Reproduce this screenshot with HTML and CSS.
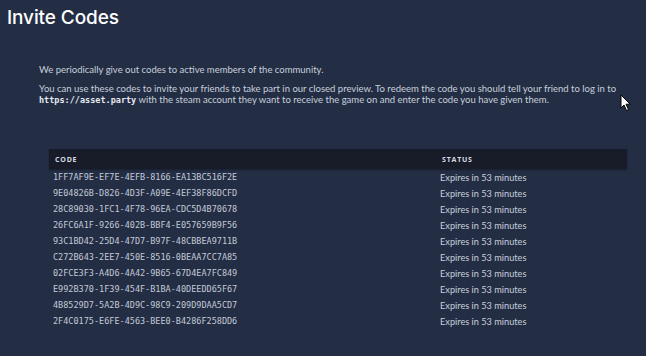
FILE: index.html
```html
<!DOCTYPE html>
<html lang="en">
<head>
<meta charset="utf-8">
<title>Invite Codes</title>
<link rel="stylesheet" href="styles.css">
</head>
<body>
<header class="top">
  <h1 class="title">Invite Codes</h1>
</header>
<main class="content">
  <p class="intro">We periodically give out codes to active members of the community.</p>
  <p class="intro">You can use these codes to invite your friends to take part in our closed preview. To redeem the code you should tell your friend to log in to <code class="url">https://asset.party</code> with the steam account they want to receive the game on and enter the code you have given them.</p>
  <div class="table-wrap">
    <table class="codes">
      <thead>
        <tr><th class="col-code">Code</th><th class="col-status">Status</th></tr>
      </thead>
      <tbody>
        <tr><td class="code">1FF7AF9E-EF7E-4EFB-8166-EA13BC516F2E</td><td class="status">Expires in 53 minutes</td></tr>
        <tr><td class="code">9E04826B-D826-4D3F-A09E-4EF38F86DCFD</td><td class="status">Expires in 53 minutes</td></tr>
        <tr><td class="code">28C89030-1FC1-4F78-96EA-CDC5D4B70678</td><td class="status">Expires in 53 minutes</td></tr>
        <tr><td class="code">26FC6A1F-9266-402B-BBF4-E057659B9F56</td><td class="status">Expires in 53 minutes</td></tr>
        <tr><td class="code">93C1BD42-25D4-47D7-B97F-48CBBEA9711B</td><td class="status">Expires in 53 minutes</td></tr>
        <tr><td class="code">C272B643-2EE7-450E-8516-0BEAA7CC7A85</td><td class="status">Expires in 53 minutes</td></tr>
        <tr><td class="code">02FCE3F3-A4D6-4A42-9B65-67D4EA7FC849</td><td class="status">Expires in 53 minutes</td></tr>
        <tr><td class="code">E992B370-1F39-454F-B1BA-40DEEDD65F67</td><td class="status">Expires in 53 minutes</td></tr>
        <tr><td class="code">4B8529D7-5A2B-4D9C-98C9-209D9DAA5CD7</td><td class="status">Expires in 53 minutes</td></tr>
        <tr><td class="code">2F4C0175-E6FE-4563-BEE0-B4286F258DD6</td><td class="status">Expires in 53 minutes</td></tr>
      </tbody>
    </table>
  </div>
</main>
<svg class="cursor" width="12" height="18" viewBox="0 0 12 18" aria-hidden="true">
  <path d="M1 1 L1 14 L4 11 L6.5 16.5 L8.5 15.6 L6 10.2 L10.2 10.2 Z" fill="#fff" stroke="#000" stroke-width="1" stroke-linejoin="round"/>
</svg>
</body>
</html>
```
FILE: styles.css
```css
html, body {
  margin: 0;
  padding: 0;
}
body {
  background: #232e45;
  color: #c9ceda;
  font-family: Lato, "Noto Sans", sans-serif;
  width: 646px;
  height: 356px;
  overflow: hidden;
  position: relative;
}
.top {
  padding: 5px 0 0 7px;
}
.title {
  margin: 0;
  font-family: Inter, "Noto Sans", sans-serif;
  font-weight: 500;
  font-size: 19px;
  line-height: 26px;
  color: #ffffff;
  letter-spacing: -0.1px;
}
.content {
  padding: 33px 9px 0 39px;
}
.intro {
  margin: 0 0 8px 0;
  font-size: 9.5px;
  line-height: 11px;
}
.url {
  font-family: "DejaVu Sans Mono", "Liberation Mono", monospace;
  font-weight: bold;
  font-size: 8.5px;
  line-height: 10px;
  color: #e6e9ef;
}
.table-wrap {
  margin: 44px 10px 0 10px;
}
.codes {
  width: 100%;
  border-collapse: collapse;
}
.codes thead tr {
  background: #171c28;
  box-shadow: 0 1px 2px rgba(0, 0, 0, 0.35);
}
.codes th {
  text-align: left;
  font-family: "Open Sans", "Noto Sans", sans-serif;
  font-weight: 700;
  font-size: 7px;
  letter-spacing: 0.8px;
  text-transform: uppercase;
  color: #d7dbe3;
  height: 20px;
  padding: 0 0 0 6px;
}
.codes td {
  height: 16px;
  padding: 0 0 0 4px;
}
.col-code {
  width: 381px;
}
.code {
  font-family: "DejaVu Sans Mono", "Liberation Mono", monospace;
  font-size: 8.5px;
  color: #c3c9d6;
}
.status {
  font-size: 9.2px;
  color: #c9ceda;
}
.cursor {
  position: absolute;
  left: 620px;
  top: 94px;
}
```
